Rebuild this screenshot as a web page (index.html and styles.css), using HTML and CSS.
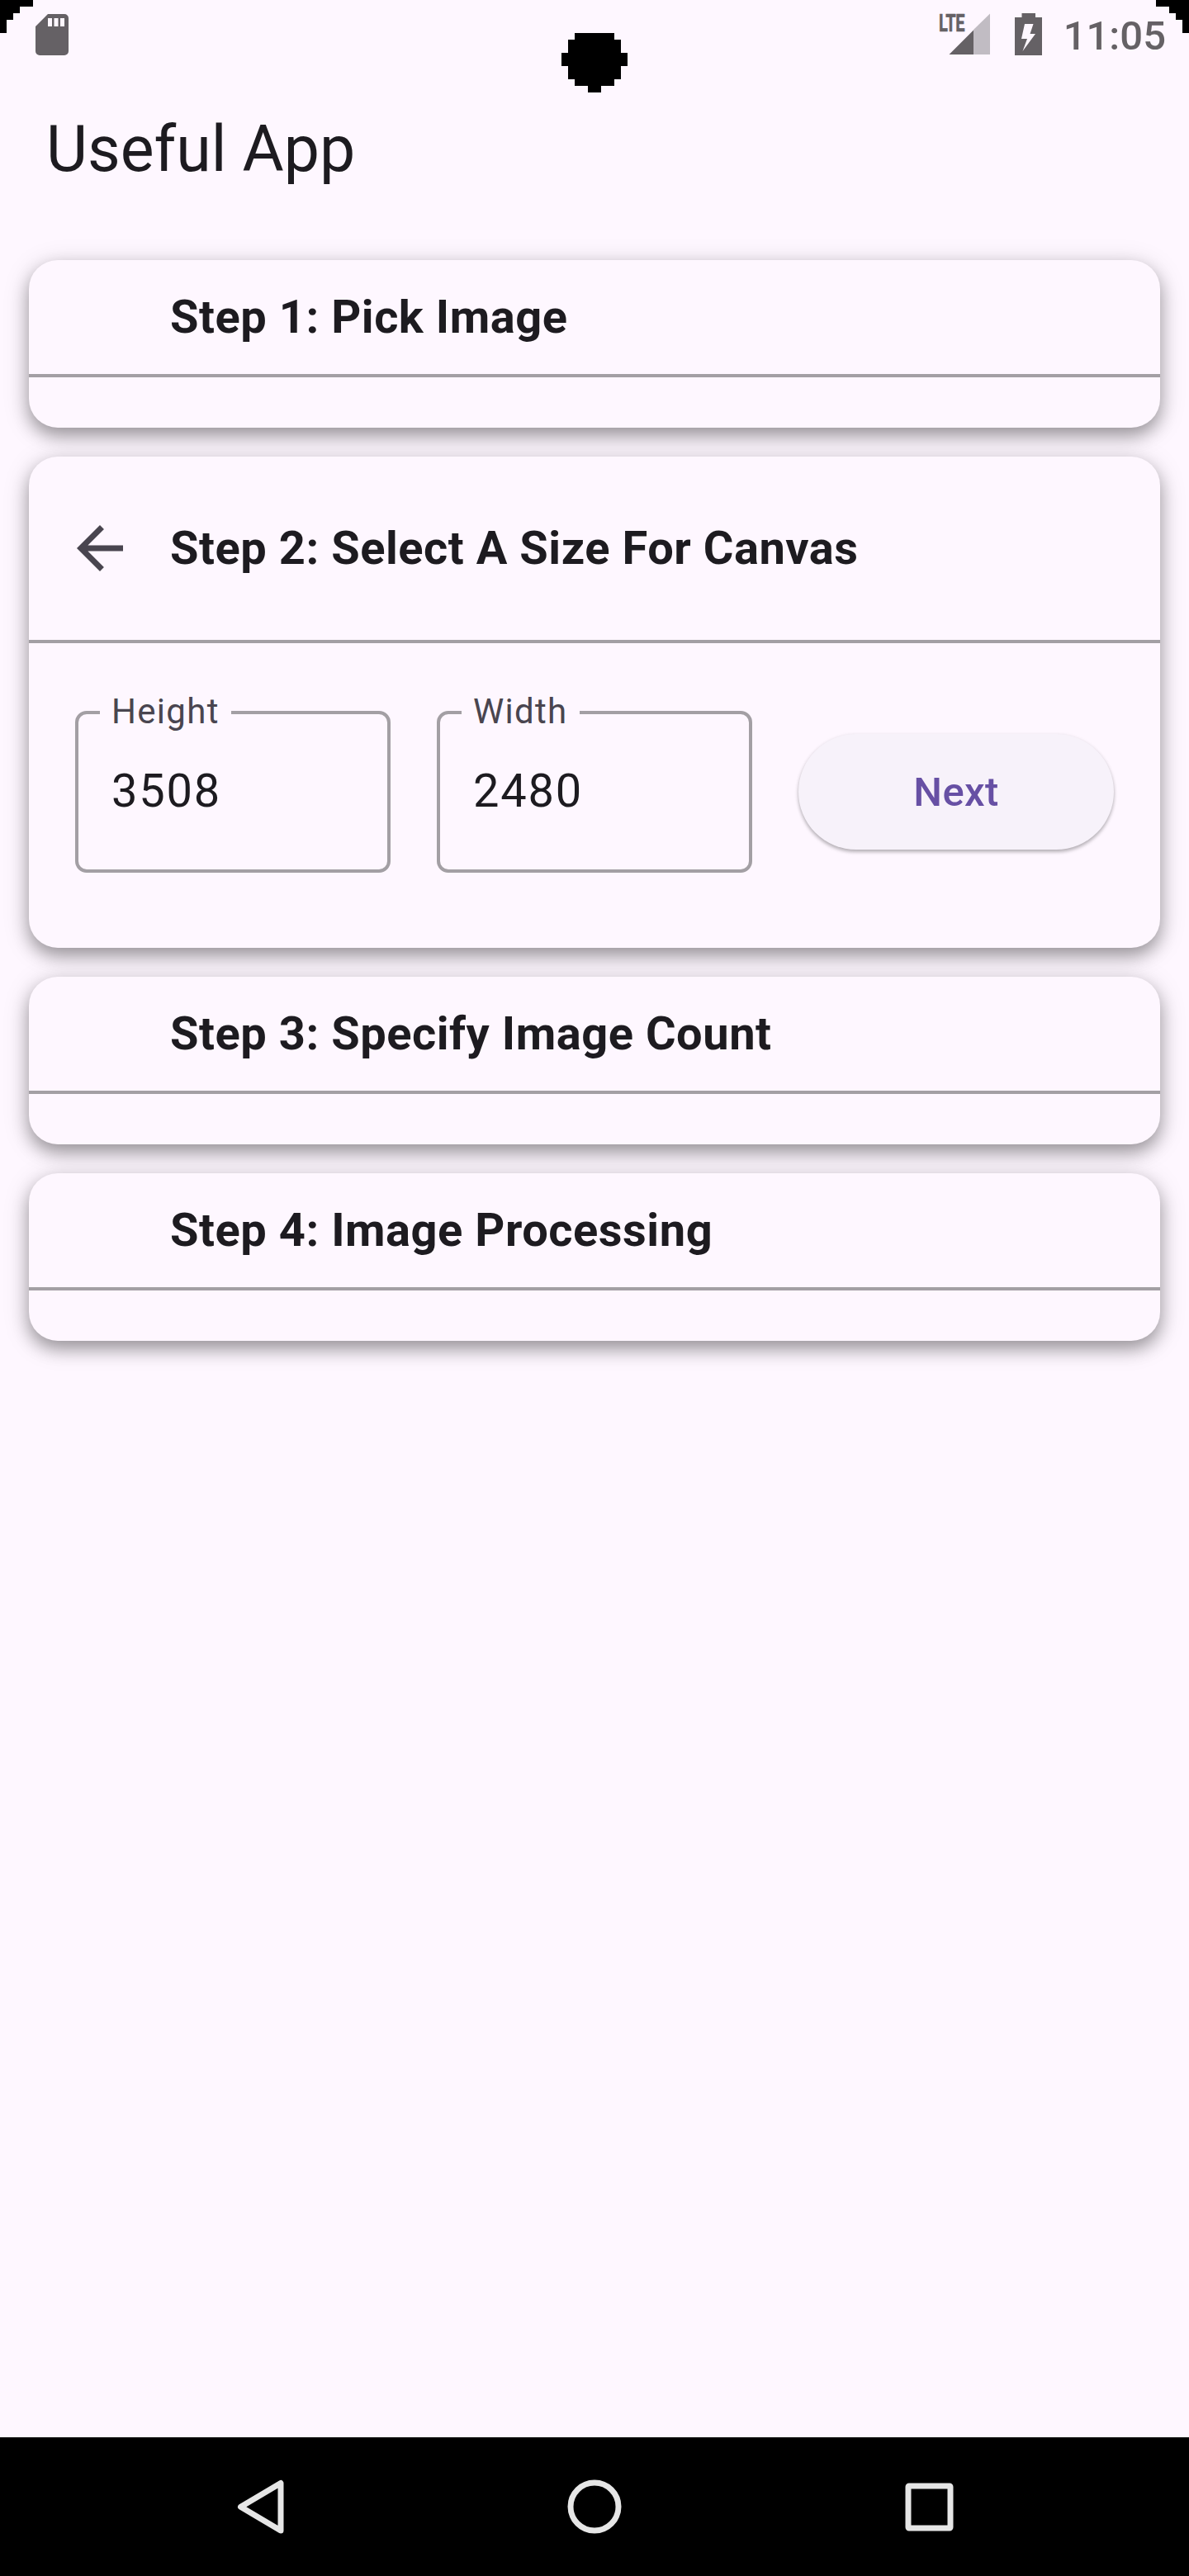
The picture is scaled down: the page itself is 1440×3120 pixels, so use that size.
FILE: index.html
```html
<!DOCTYPE html>
<html lang="en">
<head>
<meta charset="utf-8">
<title>Useful App</title>
<link rel="stylesheet" href="styles.css">
</head>
<body>
<div class="screen">
  <svg class="cutout cutout-left" width="40" height="40" viewBox="0 0 5 5" shape-rendering="crispEdges"><path d="M0 0H5V1H3V2H2V3H1V5H0Z"/></svg>
  <svg class="cutout cutout-right" width="40" height="40" viewBox="0 0 5 5" shape-rendering="crispEdges"><path d="M5 0H0V1H2V2H3V3H4V5H5Z"/></svg>
  <svg class="cutout camera" width="80" height="72" viewBox="0 0 10 9" shape-rendering="crispEdges"><path d="M2 0H8V1H9V3H10V5H9V7H8V8H6V9H4V8H2V7H1V5H0V3H1V1H2Z"/></svg>

  <header class="status-bar">
    <svg class="sd-card" width="40" height="50" viewBox="0 0 40 50"><path fill-rule="evenodd" d="M15 0H35A5 5 0 0 1 40 5V45A5 5 0 0 1 35 50H5A5 5 0 0 1 0 45V15ZM15 5V15H20V5ZM22.500 5V15H27.500V5ZM30 5V15H35V5Z"/></svg>
    <div class="status-right">
      <div class="signal">
        <svg width="50" height="50" viewBox="0 0 50 50"><path class="faint" d="M30 20L50 0.500V50H30Z"/><path d="M0.500 50L30 20.500V50Z"/></svg>
        <span class="network">LTE</span>
      </div>
      <svg class="battery" width="33" height="51" viewBox="0 0 33 51"><path fill-rule="evenodd" d="M8.500 0H25V5H33V51H0V5H8.500ZM12 13L8 31H15L9.500 46L25 25H18.500L22.500 13Z"/></svg>
      <time class="clock">11:05</time>
    </div>
  </header>

  <h1 class="app-title">Useful App</h1>

  <main class="steps">
    <section class="card">
      <h2 class="card-head">Step 1: Pick Image</h2>
      <div class="card-foot"></div>
    </section>
    <section class="card">
      <div class="card-head card-head-open">
        <svg class="back" width="84" height="84" viewBox="0 0 24 24"><path d="M20 11H7.830l5.590-5.590L12 4l-8 8 8 8 1.410-1.410L7.830 13H20z"/></svg>
        <h2 class="card-title">Step 2: Select A Size For Canvas</h2>
      </div>
      <form class="card-body">
        <fieldset class="field">
          <legend class="label">Height</legend>
          <div class="value">3508</div>
        </fieldset>
        <fieldset class="field">
          <legend class="label">Width</legend>
          <div class="value">2480</div>
        </fieldset>
        <button class="next" type="button">Next</button>
      </form>
    </section>
    <section class="card">
      <h2 class="card-head">Step 3: Specify Image Count</h2>
      <div class="card-foot"></div>
    </section>
    <section class="card">
      <h2 class="card-head">Step 4: Image Processing</h2>
      <div class="card-foot"></div>
    </section>
  </main>

  <nav class="nav-bar">
    <svg width="84" height="84" viewBox="0 0 84 84"><path d="M67 13.500V71L18.500 42.250Z"/></svg>
    <svg width="84" height="84" viewBox="0 0 84 84"><circle cx="42" cy="42" r="29"/></svg>
    <svg width="84" height="84" viewBox="0 0 84 84"><rect x="17" y="17" width="51" height="51" rx="1"/></svg>
  </nav>
</div>
</body>
</html>
```
FILE: styles.css
```css
* { box-sizing: border-box; }

body {
  margin: 0;
  background: #fef7ff;
  color: #1d1b20;
  font-family: Roboto, "Liberation Sans", sans-serif;
}

h1, h2 { margin: 0; }
svg { display: block; flex: none; }

.screen {
  position: relative;
  display: flex;
  flex-direction: column;
  width: 1440px;
  height: 3120px;
  overflow: hidden;
}

/* display cutouts lie over the screen */
.cutout { position: absolute; top: 0; fill: #000; }
.cutout-left { left: 0; }
.cutout-right { right: 0; }
.camera { left: 680px; top: 40px; }

.status-bar {
  display: flex;
  justify-content: space-between;
  align-items: flex-start;
  height: 84px;
  padding: 16px 28px 0 43px;
  fill: #656165;
  color: #656165;
}
.sd-card { margin-top: 1px; }
.status-right { display: flex; align-items: flex-start; }
.signal { position: relative; width: 50px; margin: 0 30px 0 0; }
.signal .faint { fill: #c1bcc3; }
.network {
  position: absolute;
  left: -12px;
  top: 2px;
  font-size: 29px;
  line-height: 21px;
  font-weight: 700;
  letter-spacing: -0.5px;
  -webkit-text-stroke: 0.6px #656165;
  transform: scaleX(0.69);
  transform-origin: 0 0;
}
.battery { margin-right: 26px; }
.clock {
  font-size: 49px;
  font-weight: 500;
  line-height: 56px;
}

.app-title {
  height: 196px;
  padding-left: 56px;
  font-size: 77px;
  font-weight: 400;
  line-height: 194px;
}

.steps {
  flex: 1;
  display: flex;
  flex-direction: column;
  gap: 35px;
  padding: 35px;
}

.card {
  border-radius: 35px;
  background: #fef7ff;
  box-shadow: 0 10px 20px rgba(0, 0, 0, 0.3), 0 6px 32px rgba(0, 0, 0, 0.17);
}
.card-head {
  height: 142px;
  padding-left: 171px;
  border-bottom: 4px solid #a39fa4;
  font-size: 56px;
  font-weight: 700;
  line-height: 138px;
  letter-spacing: 0.53px;
}
.card-foot { height: 61px; }
.card-head-open {
  display: flex;
  align-items: center;
  height: 226px;
  padding-left: 44px;
  line-height: 222px;
}
.card-title { font: inherit; }
.back { margin-right: 43px; fill: #49454f; }

.card-body {
  display: grid;
  grid-template-columns: repeat(3, minmax(0, 1fr));
  align-items: start;
  gap: 56px;
  height: 369px;
  padding: 59px 56px 0;
}
.field {
  min-width: 0;
  height: 219px;
  margin: 0;
  padding: 0 40px 0 26px;
  border: 4px solid #a39fa4;
  border-radius: 14px;
}
.label {
  height: 50px;
  padding: 0 14px;
  font-size: 42px;
  line-height: 48px;
  letter-spacing: 1.3px;
  color: #49454f;
}
.value {
  padding-left: 14px;
  font-size: 56px;
  line-height: 140px;
  letter-spacing: 1.75px;
}
.next {
  height: 140px;
  margin-top: 51px;
  padding: 0;
  border: 0;
  border-radius: 70px;
  background: #f7f2fa;
  box-shadow: 0 3px 4px rgba(0, 0, 0, 0.25), 0 1px 5px rgba(0, 0, 0, 0.08);
  color: #6750a4;
  font-family: inherit;
  font-size: 49px;
  font-weight: 500;
  line-height: 142px;
  letter-spacing: 0.35px;
}

.nav-bar {
  display: flex;
  justify-content: center;
  align-items: center;
  gap: 321px;
  height: 168px;
  background: #000;
}
.nav-bar svg {
  fill: none;
  stroke: #e6e6e6;
  stroke-width: 7;
  stroke-linejoin: round;
}
```
